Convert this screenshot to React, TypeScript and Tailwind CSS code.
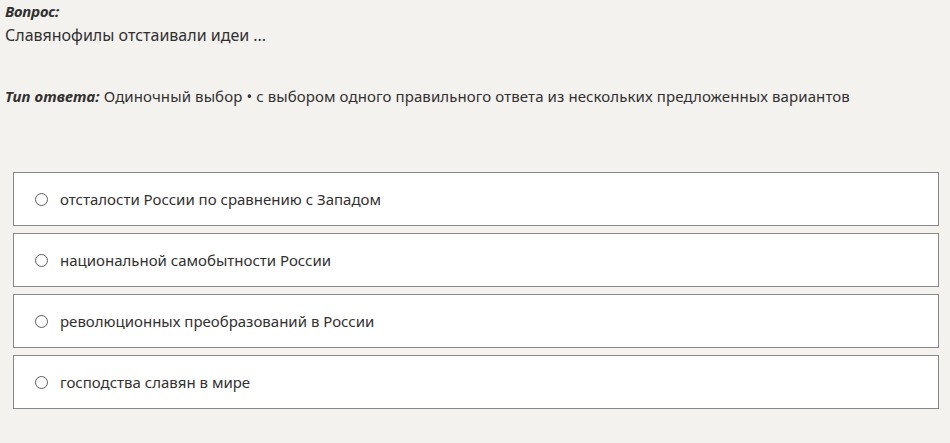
import React from "react";

const options = [
  "отсталости России по сравнению с Западом",
  "национальной самобытности России",
  "революционных преобразований в России",
  "господства славян в мире",
];

export default function App() {
  return (
    <div className="min-h-[443px] bg-[#f3f2ef] text-[#323130] font-['Noto_Sans',sans-serif] text-[15px]">
      <div className="pl-[5px] pt-[1px]">
        <div className="font-bold italic leading-[20px] tracking-[-0.2px]">Вопрос:</div>
        <div className="leading-[24px] mt-[2px] text-[16px]">Славянофилы отстаивали идеи ...</div>
        <div className="leading-[24px] mt-[37px] tracking-[0.1px]">
          <span className="font-bold italic">Тип ответа:</span>{" "}
          Одиночный выбор • с выбором одного правильного ответа из нескольких предложенных вариантов
        </div>
      </div>
      <div className="pl-[13px] pr-[11px] mt-[64px] flex flex-col gap-[7px]">
        {options.map((o) => (
          <label
            key={o}
            className="h-[54px] border border-[#8a8886] bg-white flex items-center pl-[21px] text-[15px]"
          >
            <span className="w-[13px] h-[13px] rounded-full border border-[#605e5c] bg-white shrink-0" />
            <span className="ml-[12px]">{o}</span>
          </label>
        ))}
      </div>
    </div>
  );
}
